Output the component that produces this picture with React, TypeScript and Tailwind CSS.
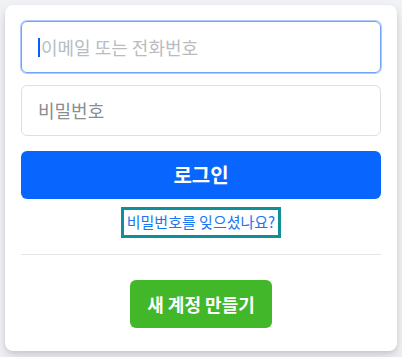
const font = { fontFamily: '"Noto Sans CJK KR", "Noto Sans", sans-serif' };

const App = () => {
  return (
    <div className="min-h-[357px] w-[402px] bg-[#f0f2f5] p-[5px]" style={font}>
      <div className="flex w-[392px] flex-col rounded-lg bg-white px-4 pt-4 pb-[23px] shadow-[0_2px_4px_rgba(0,0,0,0.1),0_8px_16px_rgba(0,0,0,0.1)]">
        <div className="flex h-[52px] items-center rounded-md border border-[#6ea4fa] px-4 shadow-[0_0_0_1px_#aecbfa]">
          <span className="mr-px h-[19px] w-[2px] bg-[#0a5cff]" />
          <span className="text-[18px] text-[#b8bcc1]">이메일 또는 전화번호</span>
        </div>
        <div className="mt-3 flex h-[51px] items-center rounded-md border border-[#dddfe2] px-4">
          <span className="text-[18px] text-[#8a8d91]">비밀번호</span>
        </div>
        <button className="mt-[15px] h-12 rounded-md bg-[#0866ff] text-[20px] font-bold text-white">
          로그인
        </button>
        <div className="mt-2 flex justify-center">
          <a className="flex h-[31px] w-[160px] items-center justify-center border-[3px] border-[#0e8f99] text-[15px] text-[#1877f2]">
            비밀번호를 잊으셨나요?
          </a>
        </div>
        <div className="mt-4 h-px bg-[#e4e6eb]" />
        <div className="mt-[25px] flex justify-center">
          <button className="h-12 w-[142px] rounded-md bg-[#42b72a] text-[18px] font-bold text-white">
            새 계정 만들기
          </button>
        </div>
      </div>
    </div>
  );
};

export default App;
